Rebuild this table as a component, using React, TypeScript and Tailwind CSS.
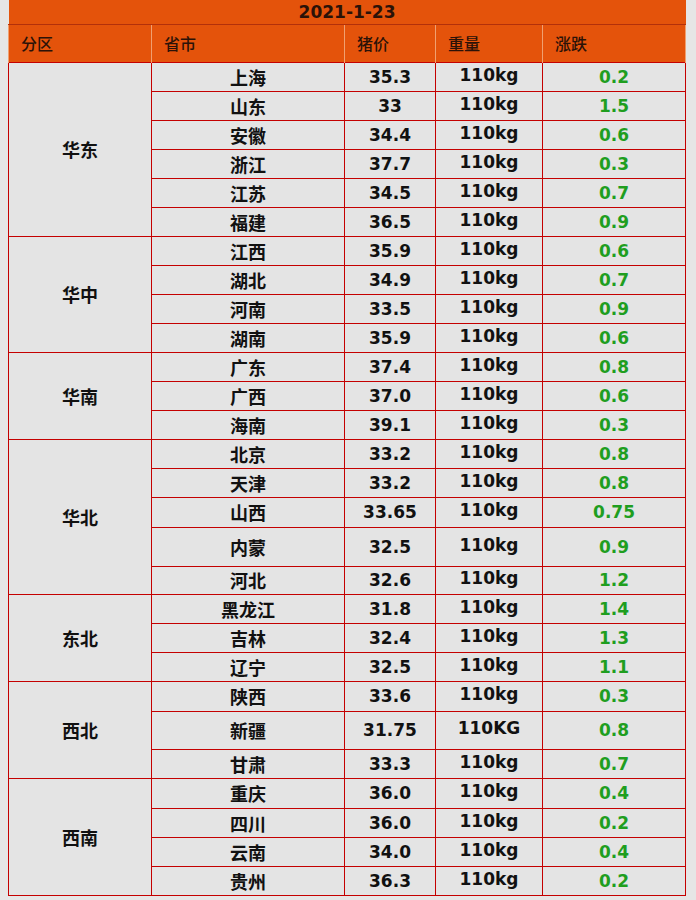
import React from "react";

type Row = { city: string; price: string; weight: string; change: string; h: number };
type Zone = { name: string; rows: Row[] };

const r = (city: string, price: string, change: string, h = 29, weight = "110kg"): Row => ({
  city,
  price,
  weight,
  change,
  h,
});

const ZONES: Zone[] = [
  {
    name: "华东",
    rows: [
      r("上海", "35.3", "0.2"),
      r("山东", "33", "1.5"),
      r("安徽", "34.4", "0.6"),
      r("浙江", "37.7", "0.3"),
      r("江苏", "34.5", "0.7"),
      r("福建", "36.5", "0.9"),
    ],
  },
  {
    name: "华中",
    rows: [r("江西", "35.9", "0.6"), r("湖北", "34.9", "0.7"), r("河南", "33.5", "0.9"), r("湖南", "35.9", "0.6")],
  },
  {
    name: "华南",
    rows: [r("广东", "37.4", "0.8"), r("广西", "37.0", "0.6"), r("海南", "39.1", "0.3")],
  },
  {
    name: "华北",
    rows: [
      r("北京", "33.2", "0.8"),
      r("天津", "33.2", "0.8"),
      r("山西", "33.65", "0.75", 30),
      r("内蒙", "32.5", "0.9", 39),
      r("河北", "32.6", "1.2", 28),
    ],
  },
  {
    name: "东北",
    rows: [r("黑龙江", "31.8", "1.4"), r("吉林", "32.4", "1.3"), r("辽宁", "32.5", "1.1")],
  },
  {
    name: "西北",
    rows: [r("陕西", "33.6", "0.3", 30), r("新疆", "31.75", "0.8", 38, "110KG"), r("甘肃", "33.3", "0.7")],
  },
  {
    name: "西南",
    rows: [r("重庆", "36.0", "0.4", 30), r("四川", "36.0", "0.2"), r("云南", "34.0", "0.4"), r("贵州", "36.3", "0.2")],
  },
];

const cjk = "font-['Noto_Sans_CJK_SC',sans-serif]";
const num = "font-['DejaVu_Sans','Noto_Sans_CJK_SC',sans-serif]";
const cell = "border border-[#c40000] bg-[#e4e4e4] p-0 text-center font-bold leading-[20px]";

export default function App() {
  return (
    <div className="min-h-[900px] w-[696px] bg-[#e6e6e6] px-2">
      <table className="w-[677px] table-fixed border-collapse">
        <colgroup>
          <col className="w-[143px]" />
          <col className="w-[193px]" />
          <col className="w-[91px]" />
          <col className="w-[107px]" />
          <col className="w-[143px]" />
        </colgroup>
        <thead>
          <tr className="h-[24px]">
            <th
              colSpan={5}
              className={`${num} border-b border-[#b3300a] bg-[#e4530b] p-0 text-center text-[17px] font-bold leading-[22px] text-[#2b1208]`}
            >
              2021-1-23
            </th>
          </tr>
          <tr className="h-[38px]">
            {["分区", "省市", "猪价", "重量", "涨跌"].map((t) => (
              <th
                key={t}
                className={`${cjk} border-x border-[#f0a070] bg-[#e4530b] px-3 text-left text-[16px] font-medium leading-[20px] text-[#2b1208]`}
              >
                {t}
              </th>
            ))}
          </tr>
        </thead>
        <tbody>
          {ZONES.map((z) =>
            z.rows.map((row, i) => (
              <tr key={row.city} style={{ height: row.h }}>
                {i === 0 && (
                  <td rowSpan={z.rows.length} className={`${cjk} ${cell} text-[18px] text-[#111]`}>
                    {z.name}
                  </td>
                )}
                <td className={`${cjk} ${cell} text-[18px] text-[#111]`}>{row.city}</td>
                <td className={`${num} ${cell} text-[17px] text-[#111]`}>{row.price}</td>
                <td className={`${num} ${cell} pb-1 text-[17px] text-[#111]`}>{row.weight}</td>
                <td className={`${num} ${cell} text-[17px] text-[#1f9e1f]`}>{row.change}</td>
              </tr>
            ))
          )}
        </tbody>
      </table>
    </div>
  );
}
